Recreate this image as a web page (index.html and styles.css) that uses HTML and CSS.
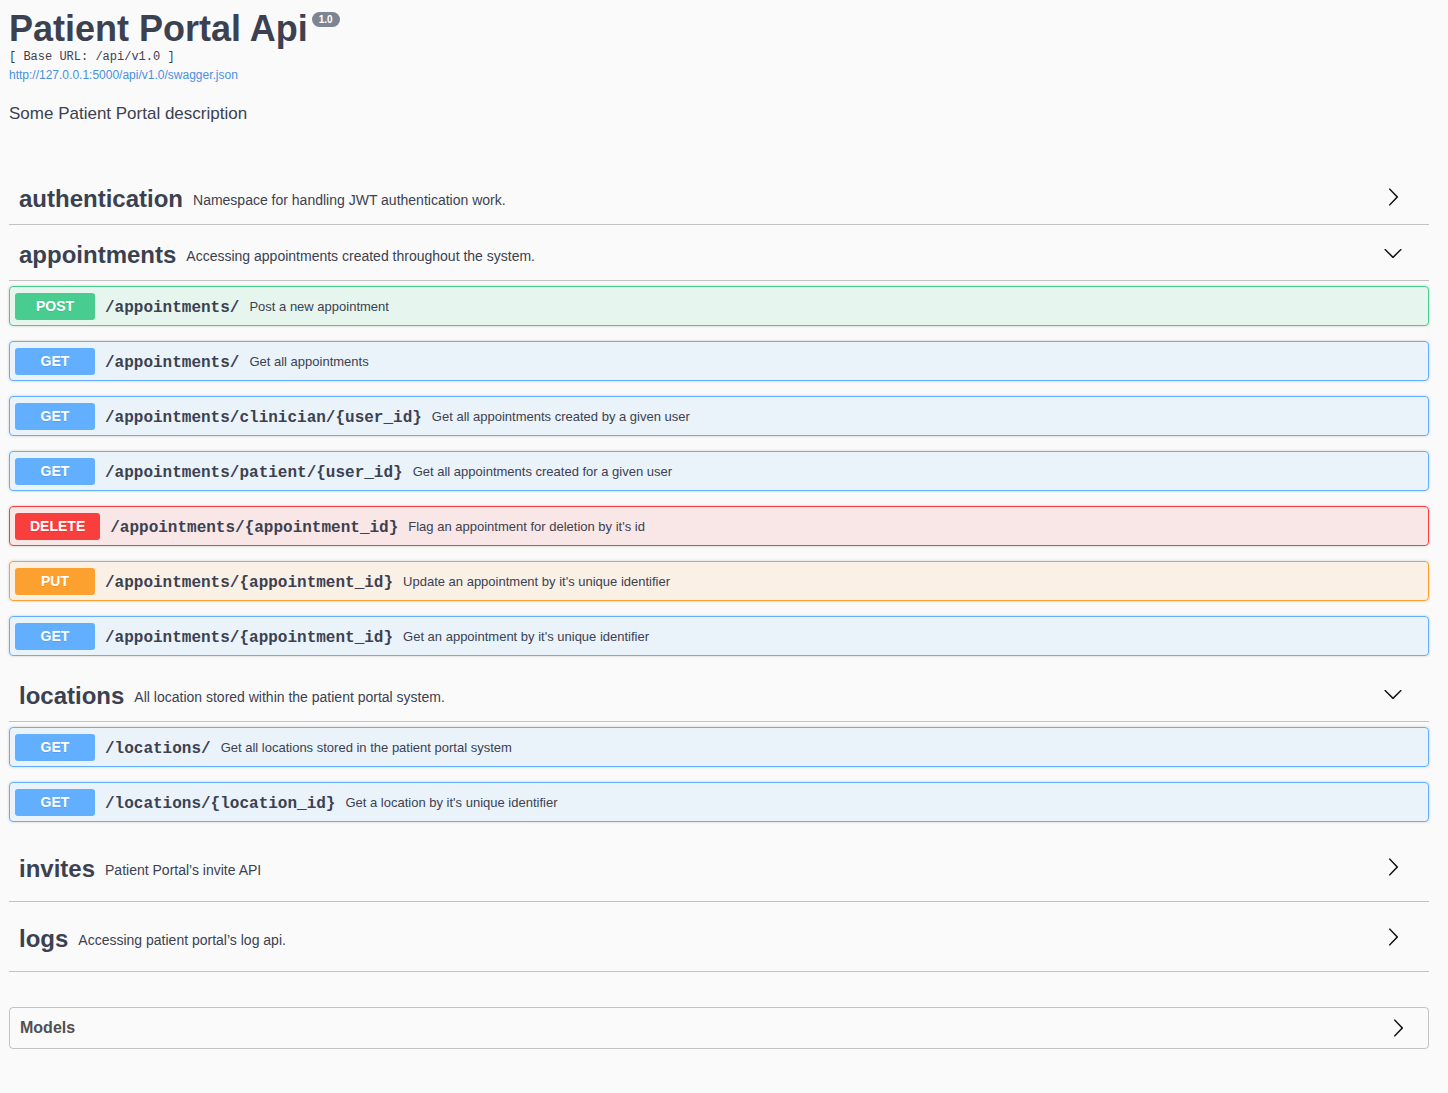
FILE: index.html
```html
<!DOCTYPE html>
<html>
<head>
<meta charset="utf-8">
<title>Patient Portal Api</title>
<link rel="stylesheet" href="styles.css">
</head>
<body>
<div class="wrapper">
  <div class="info">
    <h2 class="title">Patient Portal Api<small class="version">1.0</small></h2>
    <pre class="base-url">[ Base URL: /api/v1.0 ]</pre>
    <a class="spec-link" href="#">http://127.0.0.1:5000/api/v1.0/swagger.json</a>
    <p class="description">Some Patient Portal description</p>
  </div>

  <div class="tags">
    <section class="tag-section">
      <h4 class="tag">
        <span class="tag-name">authentication</span>
        <small class="tag-desc">Namespace for handling JWT authentication work.</small>
        <svg class="arrow" viewBox="0 0 20 20" width="20" height="20"><path d="M13.25 10L6.109 2.58c-.268-.27-.268-.707 0-.979.268-.27.701-.27.969 0l7.83 7.908c.268.271.268.709 0 .979l-7.830 7.908c-.268.271-.701.27-.969 0-.268-.269-.268-.707 0-.979L13.25 10z"/></svg>
      </h4>
    </section>

    <section class="tag-section">
      <h4 class="tag">
        <span class="tag-name">appointments</span>
        <small class="tag-desc">Accessing appointments created throughout the system.</small>
        <svg class="arrow" viewBox="0 0 20 20" width="20" height="20"><path d="M17.418 6.109c.272-.268.709-.268.979 0s.271.701 0 .969l-7.908 7.83c-.27.268-.707.268-.979 0l-7.908-7.830c-.27-.268-.27-.701 0-.969.271-.268.709-.268.979 0L10 13.25l7.418-7.141z"/></svg>
      </h4>
      <div class="ops">
        <div class="opblock post"><span class="method">POST</span><span class="path">/appointments/</span><span class="op-desc">Post a new appointment</span></div>
        <div class="opblock get"><span class="method">GET</span><span class="path">/appointments/</span><span class="op-desc">Get all appointments</span></div>
        <div class="opblock get"><span class="method">GET</span><span class="path">/appointments/clinician/{user_id}</span><span class="op-desc">Get all appointments created by a given user</span></div>
        <div class="opblock get"><span class="method">GET</span><span class="path">/appointments/patient/{user_id}</span><span class="op-desc">Get all appointments created for a given user</span></div>
        <div class="opblock delete"><span class="method">DELETE</span><span class="path">/appointments/{appointment_id}</span><span class="op-desc">Flag an appointment for deletion by it's id</span></div>
        <div class="opblock put"><span class="method">PUT</span><span class="path">/appointments/{appointment_id}</span><span class="op-desc">Update an appointment by it's unique identifier</span></div>
        <div class="opblock get"><span class="method">GET</span><span class="path">/appointments/{appointment_id}</span><span class="op-desc">Get an appointment by it's unique identifier</span></div>
      </div>
    </section>

    <section class="tag-section">
      <h4 class="tag">
        <span class="tag-name">locations</span>
        <small class="tag-desc">All location stored within the patient portal system.</small>
        <svg class="arrow" viewBox="0 0 20 20" width="20" height="20"><path d="M17.418 6.109c.272-.268.709-.268.979 0s.271.701 0 .969l-7.908 7.83c-.27.268-.707.268-.979 0l-7.908-7.830c-.27-.268-.27-.701 0-.969.271-.268.709-.268.979 0L10 13.25l7.418-7.141z"/></svg>
      </h4>
      <div class="ops">
        <div class="opblock get"><span class="method">GET</span><span class="path">/locations/</span><span class="op-desc">Get all locations stored in the patient portal system</span></div>
        <div class="opblock get"><span class="method">GET</span><span class="path">/locations/{location_id}</span><span class="op-desc">Get a location by it's unique identifier</span></div>
      </div>
    </section>

    <section class="tag-section">
      <h4 class="tag tag-tall">
        <span class="tag-name">invites</span>
        <small class="tag-desc">Patient Portal’s invite API</small>
        <svg class="arrow" viewBox="0 0 20 20" width="20" height="20"><path d="M13.25 10L6.109 2.58c-.268-.27-.268-.707 0-.979.268-.27.701-.27.969 0l7.83 7.908c.268.271.268.709 0 .979l-7.830 7.908c-.268.271-.701.27-.969 0-.268-.269-.268-.707 0-.979L13.25 10z"/></svg>
      </h4>
    </section>

    <section class="tag-section">
      <h4 class="tag tag-tall">
        <span class="tag-name">logs</span>
        <small class="tag-desc">Accessing patient portal’s log api.</small>
        <svg class="arrow" viewBox="0 0 20 20" width="20" height="20"><path d="M13.25 10L6.109 2.58c-.268-.27-.268-.707 0-.979.268-.27.701-.27.969 0l7.83 7.908c.268.271.268.709 0 .979l-7.830 7.908c-.268.271-.701.27-.969 0-.268-.269-.268-.707 0-.979L13.25 10z"/></svg>
      </h4>
    </section>
  </div>

  <section class="models">
    <h4 class="models-title">
      <span>Models</span>
      <svg class="models-arrow" viewBox="0 0 20 20" width="20" height="20"><path d="M13.25 10L6.109 2.58c-.268-.27-.268-.707 0-.979.268-.27.701-.27.969 0l7.83 7.908c.268.271.268.709 0 .979l-7.830 7.908c-.268.271-.701.27-.969 0-.268-.269-.268-.707 0-.979L13.25 10z"/></svg>
    </h4>
  </section>
</div>
</body>
</html>
```

FILE: styles.css
```css
* { box-sizing: border-box; }

html, body {
  margin: 0;
  padding: 0;
  background: #fafafa;
}

body {
  font-family: "Liberation Sans", Arial, sans-serif;
  color: #3b4151;
}

.wrapper {
  padding: 0 19px 0 9px;
}

.info {
  padding-top: 7px;
}

.title {
  margin: 0;
  font-size: 36px;
  line-height: 43px;
  font-weight: 700;
  color: #3b4151;
  display: flex;
  align-items: flex-start;
}

.version {
  margin: 5px 0 0 4px;
  padding: 2px 7px;
  border-radius: 57px;
  background: #7d8492;
  color: #fff;
  font-size: 10px;
  line-height: 11px;
  font-weight: 700;
}

.base-url {
  margin: 0;
  font-family: "Liberation Mono", "Courier New", monospace;
  font-size: 12px;
  line-height: 14px;
  color: #3b4151;
}

.spec-link {
  display: block;
  margin-top: 4px;
  font-size: 12px;
  line-height: 14px;
  color: #4990e2;
  text-decoration: none;
}

.description {
  margin: 22px 0 0;
  font-size: 17px;
  line-height: 20px;
  color: #3b4151;
}

.tags {
  margin-top: 50px;
}

.tag {
  margin: 0 0 5px;
  height: 51px;
  padding: 0 26px 0 10px;
  display: flex;
  align-items: center;
  border-bottom: 1px solid rgba(59, 65, 81, 0.3);
  font-weight: 400;
}

.tag-tall {
  height: 65px;
}

.tag-name {
  font-size: 24px;
  font-weight: 700;
  line-height: 30px;
  color: #3b4151;
}

.tag-desc {
  flex: 1;
  padding: 1px 10px 0;
  font-size: 14px;
  font-weight: 400;
  color: #3b4151;
}

.arrow {
  flex: none;
  margin-bottom: 5px;
  fill: #111;
}

.ops {
  display: flex;
  flex-direction: column;
}

.opblock {
  height: 40px;
  margin: 0 0 15px;
  padding: 0 5px;
  display: flex;
  align-items: center;
  border: 1px solid;
  border-radius: 4px;
  box-shadow: 0 0 3px rgba(0, 0, 0, 0.19);
}

.method {
  min-width: 80px;
  padding: 6px 15px;
  font-size: 14px;
  line-height: 15px;
  font-weight: 700;
  text-align: center;
  color: #fff;
  border-radius: 3px;
  text-shadow: 0 1px 0 rgba(0, 0, 0, 0.1);
}

.path {
  padding: 3px 10px 0;
  font-family: "Liberation Mono", "Courier New", monospace;
  font-size: 16px;
  font-weight: 700;
  color: #3b4151;
}

.op-desc {
  font-size: 13px;
  color: #3b4151;
}

.post { background: rgba(73, 204, 144, 0.1); border-color: #49cc90; }
.post .method { background: #49cc90; }

.get { background: rgba(97, 175, 254, 0.1); border-color: #61affe; }
.get .method { background: #61affe; }

.delete { background: rgba(249, 62, 62, 0.1); border-color: #f93e3e; }
.delete .method { background: #f93e3e; }

.put { background: rgba(252, 161, 48, 0.1); border-color: #fca130; }
.put .method { background: #fca130; }

.models {
  margin: 35px 0 30px;
  border: 1px solid rgba(59, 65, 81, 0.3);
  border-radius: 4px;
}

.models-title {
  margin: 0;
  height: 40px;
  padding: 0 20px 0 10px;
  display: flex;
  align-items: center;
  justify-content: space-between;
  font-size: 16px;
  font-weight: 700;
  color: #505050;
}

.models-arrow {
  fill: #111;
}
```
